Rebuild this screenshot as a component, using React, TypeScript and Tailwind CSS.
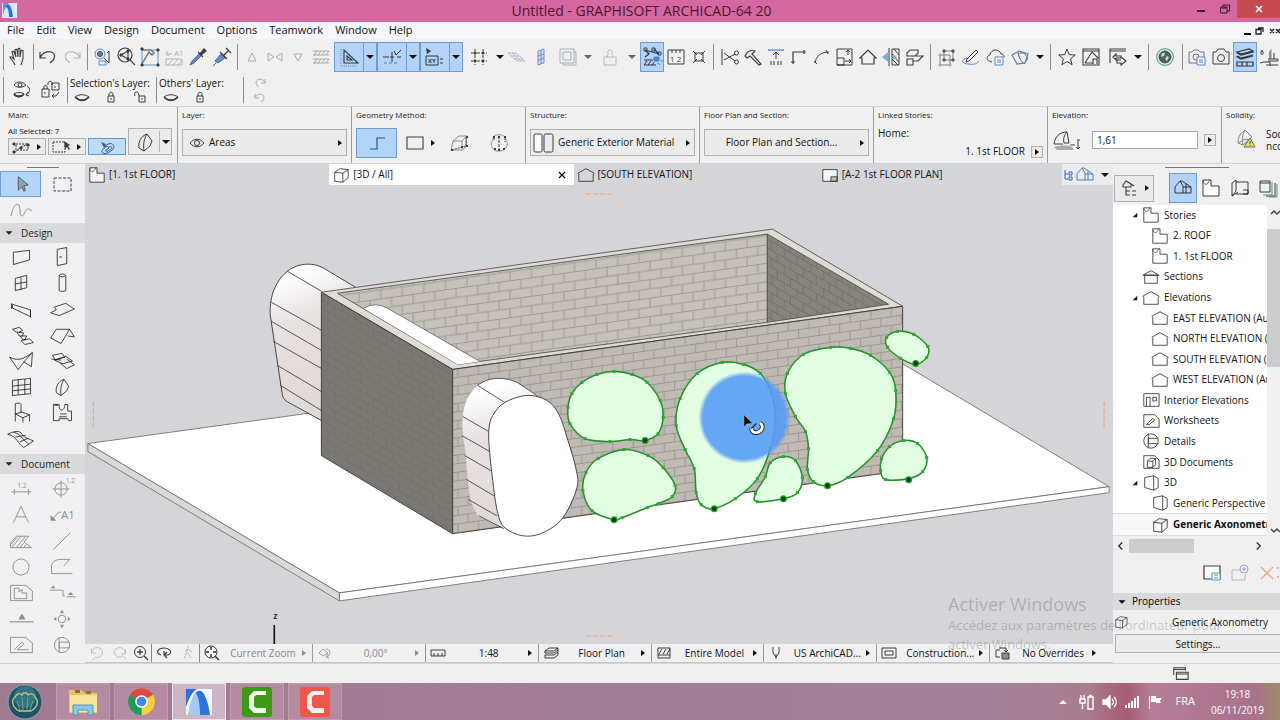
import { ReactNode } from "react";

type Point = [number, number];

const TEXT = "fill-current stroke-none font-['Open_Sans',sans-serif]";

const icons: Record<string, ReactNode> = {
  hand: (
    <path d="M9 20c-1-3-4-6-5-8 1-1 2 0 4 2L6 7c0-1 2-1 2 0l2 5-1-7c0-1 2-1 2 0l1 7V4c0-1 2-1 2 0v8l1-6c0-1 2-1 2 0v8l-2 6" strokeWidth="1.1" />
  ),
  undo: <path d="M4 7v6h6M4 13C7 6 15 5 18 9c2 4-1 7-4 9" strokeWidth="1.2" />,
  redo: <path d="M20 7v6h-6M20 13C17 6 9 5 6 9c-2 4 1 7 4 9" strokeWidth="1.2" />,
  findSelect: (
    <>
      <circle cx="10" cy="9" r="5" stroke="#2f6fb5" />
      <circle cx="10" cy="9" r="2.5" fill="#2f6fb5" />
      <path d="M14 13l5 5M19 6v12M17 8l2-2" />
      <path d="M9 16h7v4H9z" stroke="#2f6fb5" fill="#efeff0" />
    </>
  ),
  zoomGraph: (
    <>
      <circle cx="11" cy="10" r="7" strokeWidth="1.2" />
      <path d="M16 15l5 5M7 10l7-4 0 8z" strokeWidth="1.1" />
      <circle cx="7" cy="10" r="1.200" fill="currentColor" />
      <circle cx="14" cy="6" r="1.200" fill="currentColor" />
      <circle cx="14" cy="14" r="1.200" fill="currentColor" />
    </>
  ),
  hammerBox: (
    <>
      <path d="M4 4v16h16V5h-6" stroke="#3b78bd" />
      <path d="M5 5h8l3 3-2 2-3-3-7 12" stroke="#555" strokeWidth="1.400" />
      <path d="M3 3h2v2H3zM19 4h2v2h-2zM3 19h2v2H3zM19 19h2v2h-2z" fill="currentColor" />
    </>
  ),
  labelHatch: (
    <>
      <path d="M4 14h16v6H4zM6 20l5-6M11 20l5-6M16 20l4-5M4 9h6M4 9l2-3M4 9l3 2" />
      <text x="12" y="11" fontSize="8" className={TEXT}>A1</text>
    </>
  ),
  pick: (
    <>
      <path d="M4 20l2-4 7-7 2 2-7 7z" fill="#3f74b8" stroke="#1f4b85" />
      <path d="M12 7l5 5M14 9l4-5 2 2-5 4z" fill="#222" strokeWidth="1.3" />
    </>
  ),
  inject: (
    <>
      <path d="M3 21l3-3M5 16l6-7 4 4-7 5z" fill="#3f74b8" stroke="#1f4b85" />
      <path d="M10 7l7 7M14 10l5-5M16 3l5 5" strokeWidth="1.3" />
    </>
  ),
  triUp: <path d="M12 8l4 8H8z" />,
  triPair: <path d="M5 8v8l6-4zM19 8v8l-6-4z" />,
  triDown: <path d="M12 16l4-7H8z" />,
  layersHatch: (
    <path d="M4 6h16M4 10h16M4 14h16M4 18h16M5 10l3-4M9 10l3-4M13 10l3-4M17 10l3-4M5 18l3-4M9 18l3-4M13 18l3-4M17 18l3-4" />
  ),
  setSquare: (
    <>
      <path d="M7 5v13h14zM10 11v4h5z" strokeWidth="1.1" />
      <path d="M4 4v17h17" stroke="#777" strokeDasharray="1 1" />
    </>
  ),
  guideLine: (
    <>
      <path d="M3 12h6M12 7v10M10 12h4M14 6l2 4 5-5M17 12h4" />
      <path d="M4 18h15" stroke="#2f6fb5" strokeDasharray="3 2" />
    </>
  ),
  tracker: (
    <>
      <path d="M3 11h12v9H3zM17 14h3M17 18h3" />
      <path d="M3 3l5 3-4 3z" fill="currentColor" stroke="none" />
      <text x="5" y="18" fontSize="6" fontWeight="bold" className={TEXT}>XY</text>
    </>
  ),
  grid: (
    <>
      <path d="M8 4v16M16 4v16M4 8h16M4 16h16" strokeDasharray="4 1" />
      <path d="M7 7h2v2H7zM15 7h2v2h-2zM7 15h2v2H7zM15 15h2v2h-2z" fill="currentColor" stroke="none" />
    </>
  ),
  flatGrid: <path d="M3 8h8l9 8h-8zM6 11h8M9 14h9M7 8l9 8" />,
  plane: <path d="M9 6l6-2v14l-6 2zM9 11l6-2M9 15l6-2M12 5v14" fill="#c7d8f5" />,
  frames: <path d="M4 4h14v14H4zM7 7h8v8H7zM18 7h2v13H7v-2" />,
  weight: <path d="M6 12h12v8H6zM9 12c0-3 2-2 1-4-2-4 6-4 4 0-1 2 1 1 1 4" />,
  snapPen: (
    <>
      <path d="M5 5l14 4M4 15h9M4 20h12M5 5l4 4-4 3M14 4l5 5" strokeWidth="1.2" />
      <path d="M4 3h3v3H4zM12 3h3v3h-3zM18 7h3v3h-3z" strokeWidth="0.9" />
      <path d="M14 12h5v4h-5z" fill="#2f72c4" stroke="#2f72c4" />
      <path d="M4 20l3-4M8 20l3-4M12 20l2-3" />
      <path d="M18 18l2 2M21 16h2" stroke="#2f72c4" />
    </>
  ),
  ruler: (
    <>
      <path d="M4 5h16v14H4zM8 5v3M12 5v3M16 5v3" />
      <text x="6" y="17" fontSize="8" className={TEXT}>1 2</text>
    </>
  ),
  explode: <path d="M8 8h8v8H8zM6 6l4 4M18 6l-4 4M6 18l4-4M18 18l-4-4" />,
  scissors: (
    <>
      <path d="M4 4v16M6 8l11 8M6 15l11-6" />
      <circle cx="18.500" cy="8" r="2" />
      <circle cx="18.500" cy="17" r="2" />
    </>
  ),
  axe: <path d="M4 11c3-6 7-6 10-5l-3 3 9 10-2 1-9-9-3 2z" strokeWidth="1.2" />,
  adjust: (
    <>
      <path d="M4 5h16" stroke="#3467c4" strokeWidth="1.300" />
      <path d="M12 7v7M9 10l3-3 3 3M7 16v4M10 16v4M14 16v4M17 16v4" />
    </>
  ),
  fillet: <path d="M6 19V7h13M4 17h4M17 5v4" strokeWidth="1.2" />,
  curve: <path d="M5 18c1-7 6-11 14-11M4 16l3 3M16 5l2 4" />,
  resize: (
    <path d="M4 4h15v16H4zM4 13h7v7H4M15 10V5M13 7l2-2 2 2M12 16h6M16 14l2 2-2 2" />
  ),
  home: <path d="M4 13l8-8 8 8h-2v6H6v-6z" strokeWidth="1.2" />,
  splitHatch: (
    <>
      <path d="M10 3v18M13 4h7v16h-7zM13 9l7 8M13 14l6 6M15 4l5 6" />
      <path d="M9 7v10l-6-5zM14 9l4 3-4 3z" fill="#5b9cf0" stroke="none" />
    </>
  ),
  stack: <path d="M5 8l3-3h8v3l-3 3H5zM5 14h6v6H5zM8 11h13l-5 5h-5M5 11h3" strokeWidth="1.1" />,
  group: (
    <>
      <path d="M9 6h9v9H9zM5 10h10v10H5z" stroke="#666" />
      <path d="M8 5h2v2H8zM17 5h2v2h-2zM17 14h2v2h-2zM8 14h2v2H8z" />
      <path d="M4 9h2v2H4zM4 19h2v2H4zM14 19h2v2h-2z" stroke="#999" />
    </>
  ),
  pencil: (
    <>
      <path d="M8 14l9-9 2 2-9 9-3 1z" />
      <path d="M8 13c-6 2-6 5 1 6s11-1 10-3" stroke="#3467c4" />
    </>
  ),
  cloudPage: (
    <>
      <path d="M9 17c-7-1-5-7-2-7 1-7 10-6 11-1 2 0 3 1 3 3" />
      <path d="M12 12h8v8h-8zM14 15h4M14 17h4" stroke="#3467c4" fill="#fff" />
    </>
  ),
  morph: (
    <>
      <path d="M3 10l7-4 9 3-3 9-8 1z" stroke="#3467c4" strokeWidth="1.200" />
      <path d="M9 8h6l4 5-4 6-4-5zM9 8l2 6" stroke="#555" />
    </>
  ),
  star: <path d="M12 4l2.200 5.600 6 .4-4.600 3.800 1.500 5.900L12 16.500 6.900 19.700l1.500-5.900L3.800 10l6-.4z" />,
  picture: <path d="M4 4h16v16H4zM6 18l7-11 6 6M4 6h16M14 19v-5h4v5M6 18h8" strokeWidth="1.100" />,
  swap: <path d="M4 18V4h16M4 6h16M10 9l-3 3 3 3v-2h5v-2h-5zM15 12l5 4-5 4v-2h-4v-3h4" strokeWidth="1.100" />,
  globe: (
    <>
      <circle cx="12" cy="12" r="8.300" stroke="#2f9b75" strokeWidth="1.200" />
      <circle cx="12" cy="12" r="6" fill="#254039" stroke="#1c2b28" />
      <path d="M9 8l3 0-1 3-3 1zM14 11l2 1-2 4-2-2z" fill="#b5dccb" stroke="none" />
    </>
  ),
  cameraPage: (
    <>
      <path d="M4 7h3l2-2h4l2 2h4v11H4z" stroke="#555" />
      <circle cx="11" cy="12" r="3" stroke="#555" />
      <path d="M12 12h8v8h-8zM14 15h4M14 17h4" stroke="#3467c4" fill="#fff" />
    </>
  ),
  camera: (
    <>
      <path d="M4 7h3l2-3h6l2 3h3v12H4z" />
      <circle cx="12" cy="13" r="3.500" />
    </>
  ),
  sheets: (
    <path d="M4 7l12-3 4 2-12 3zM4 7v1l4 2 12-3V6M4 11l4 2 12-3M4 11v1l4 2 12-3M4 17h16v4H4zM9 17v4M14 17v4" strokeWidth="1.200" />
  ),
  siteFill: (
    <>
      <path d="M5 5c-4 6 4 6 0 0M3 18l4-1h6v4M9 20h12M11 14h10v2H11M13 14V6M17 14V8" />
      <path d="M14 4v9" stroke="#1f9f6b" />
    </>
  ),
  eyeSwap: (
    <>
      <path d="M4 7c3-4 8-4 12 0-4 3-9 3-12 0zM4 16c2-2 8-2 10 0-2 4-8 4-10 0zM17 8c4 2 3 7-1 9M18 14l-2 3 3 1" />
      <circle cx="10" cy="7" r="2" />
      <path d="M4 16c2 3 8 3 10 0" strokeWidth="1.800" />
    </>
  ),
  lockSwap: (
    <path d="M3 11h7v8H3zM5 11c-1-5 4-5 3 0M13 5h7v7h-7zM9 7c-1-5 5-5 4 0M20 14l-3 4h-3M15 16l-2 2 2 2M6 14v2M16 8v2" />
  ),
  eyeClosed: (
    <>
      <path d="M5 12c4-3 10-3 14 0-4 5-10 5-14 0z" />
      <path d="M5 12c4 4 10 4 14 0" strokeWidth="1.600" />
    </>
  ),
  lock: <path d="M9 11h6v6H9zM10 11c-1-5 5-5 4 0M12 13v2" />,
  unlock: <path d="M11 11h6v6h-6zM7 11c-2-5 4-6 4 0M14 13v2" />,
  nodes: (
    <>
      <path d="M7 9h12v6H7zM5 18l7-6 7-3" strokeDasharray="2 1" />
      <path d="M4 8h2v2H4zM4 16h2v2H4zM11 12h2v2h-2zM18 9h2v2h-2z" fill="currentColor" />
    </>
  ),
  marqueeArrow: (
    <>
      <path d="M4 7h12v10H4z" strokeDasharray="2 1" />
      <path d="M15 6l6 4-2 1 2 3-1 1-2-3-2 2z" fill="currentColor" stroke="none" />
    </>
  ),
  magnet: (
    <>
      <path d="M9 12l4-3c5-2 8 3 4 6l-4 3c-5 2-8-1-5-4l4-3 2 2-3 2c-1 2 1 2 2 1l3-2c2-2 0-3-2-2" />
      <path d="M6 7l5 2-2 4z" fill="currentColor" stroke="none" />
    </>
  ),
  shell: <path d="M14 4C8 6 5 12 6 18l5 3c-1-7 0-12 3-17l5 7-2 5-6 5" />,
  eye: (
    <>
      <path d="M5 12c4-5 10-5 14 0-4 5-10 5-14 0z" />
      <circle cx="12" cy="12" r="2.500" />
    </>
  ),
  polyline: <path d="M5 18h7V7h8" stroke="#17365e" strokeWidth="1.200" />,
  rect: <path d="M4 6h16v12H4z" strokeWidth="1.100" />,
  cubeNodes: (
    <>
      <path d="M4 19l2-9 6-5h8l-1 11-4 3zM6 10h9l5-5M15 10v8" stroke="#777" />
      <path d="M5 19l10-3 4-1V6" strokeDasharray="2 1" />
      <path d="M4 18h2v2H4zM19 5h2v2h-2zM14 15h2v2h-2zM19 14h2v2h-2z" fill="currentColor" stroke="none" />
    </>
  ),
  revolve: (
    <>
      <path d="M6 6c3-3 9-3 12 0l1 3c4 5-1 10-5 11h-5c-5-3-6-8-3-11z" stroke="#777" />
      <path d="M12 5v15M7 6v4M18 6v5" strokeDasharray="3 1" />
      <path d="M6 5h2v2H6zM11 5h2v2h-2zM17 5h2v2h-2zM11 18h2v2h-2zM7 17h2v2H7zM16 17h2v2h-2z" fill="currentColor" stroke="none" />
    </>
  ),
  composite: (
    <>
      <rect x="2" y="3" width="8" height="18" rx="1.500" fill="#fff" />
      <rect x="12" y="3" width="9" height="18" rx="1.500" />
    </>
  ),
  shellLevel: (
    <>
      <path d="M2 16c1-7 5-12 13-12l2 11h-5c-1-4 0-8 3-11M2 16h9M18 17h5" />
      <path d="M26 13v8M24 19l2 2 2-2M25 12h3" />
      <path d="M2 19c6-2 14-2 18 0l2 3H5z" fill="#999" stroke="none" />
    </>
  ),
  warnShell: (
    <>
      <path d="M11 2c-6 4-7 9-7 13l5 2 9-8zM11 2c-3 5-3 10-2 15M4 15l7-4 7 2" stroke="#666" />
      <path d="M16 10l5 9H10z" fill="#f3e233" stroke="#444" />
      <path d="M16 13v3M16 17v1" />
    </>
  ),
  arrow: <path d="M9 4v15l4-4 2 5 2-1-2-5 5-1z" fill="#8b97a5" stroke="#333" />,
  marquee: <path d="M4 6h17v13H4z" strokeDasharray="3 1.500" />,
  spline: <path d="M2 18C5 3 11 4 11 12s3 7 5 2 5-3 7-1" />,
  wall: <path d="M4 7l17-2v10L4 20z" />,
  door: <path d="M7 4l10-2v17l-10 2zM9 12h3" />,
  window: <path d="M6 7l12-3v13L6 20zM6 13l12-2M12 6v13" />,
  column: <path d="M9 4c1-2 6-2 7 0v16c-1 1-6 1-7 0zM9 4c1 2 6 2 7 0" />,
  beam: <path d="M3 7l19 6v7L3 11zM2 6v6M22 13v8" />,
  slab: <path d="M0 16l6-3-2-3 12-4 9 6-16 7z" />,
  stair: <path d="M3 6l7-2 4 3-4 2 5 1-2 3 5 0-2 4 5-1 4 4-9 2-4-4 4-1M3 6l4 3h4M8 9l2 4h4M11 13l3 4h3" />,
  roof: <path d="M0 15l6-9h14l-9 15zM20 6l5 8-7-1" />,
  meshTri: <path d="M0 8c8 4 14 3 24-5l-1 15-8-5-6 8zM15 13l8-9" />,
  skylight: <path d="M2 6l10-2 3 4-10 3zM4 11l12-4 7 5-10 3zM10 14l7 6 8-4-8-6M1 10l10 1" />,
  curtain: <path d="M3 5l19-2v16L3 21zM3 11l19-2M3 16l19-2M9 4v16M16 4v16" />,
  chair: <path d="M6 2c4-1 7 0 6 2v8M6 2v19M6 13l7-2 8 3-7 3zM14 17v5M21 14v7" />,
  zone: <path d="M3 3h6c0 3 0 5 2 6 3 0 4-3 4-6h3v7h4v10h-3l-1-2H9v2H3zM10 13h7M9 16h8M4 4l4 0" />,
  mesh: <path d="M-2 7c8-4 13-4 15 0 3 4 8 5 12 7l-10 7C9 18 8 9-2 7zM6 10l11-2M11 15l9-4M4 5c8 1 8 7 16 12" />,
  dim: (
    <>
      <path d="M2 15h21M5 12v6M20 12v6" />
      <text x="8" y="11" fontSize="7" className={TEXT}>1.2</text>
    </>
  ),
  levelDim: (
    <>
      <circle cx="11" cy="12" r="6.500" />
      <path d="M2 12h18M11 3v18" />
      <text x="16" y="6" fontSize="7" className={TEXT}>1.2</text>
    </>
  ),
  textA: <path d="M4 20l8-17 8 17M7 14h10" />,
  label: (
    <>
      <path d="M1 17l6-6c1-2 2-2 4-2" />
      <path d="M0 18v-6l6 6z" fill="currentColor" stroke="none" />
      <text x="11" y="16" fontSize="12" className={TEXT}>A1</text>
    </>
  ),
  fill: <path d="M1 19v-5l6-7h13l-5 6 8 6zM3 18l9-11M7 19l9-11M11 19l4-5M15 19l2-3M2 15l6-7" />,
  line: <path d="M3 21L21 3" />,
  circle: <circle cx="12" cy="12" r="8.500" />,
  polyarc: <path d="M23 19H1V10c1-4 5-6 9-6h10l-6 7" />,
  drawing: <path d="M1 4h16l7 6v10H1zM5 7h5v4l3-3v4h5v6H5z" />,
  section: (
    <>
      <path d="M-1 9h14v6h2M17 16h9" />
      <path d="M0 7l3-3 2 3zM18 14l3-3 3 3z" fill="currentColor" stroke="none" />
    </>
  ),
  elevation: (
    <>
      <path d="M0 15h25" strokeWidth="1.200" />
      <path d="M10 12l3-5 3 5z" fill="currentColor" />
    </>
  ),
  interior: (
    <>
      <circle cx="12" cy="12" r="4" />
      <path d="M12 2l2 4h-4zM12 22l2-4h-4zM3 12l3-2v4zM21 12l-3-2v4z" fill="currentColor" stroke="none" />
    </>
  ),
  worksheet: <path d="M1 4h16l7 6v10H1zM5 17l8-8 2 2-7 6h12" />,
  detail: (
    <>
      <circle cx="12" cy="12" r="8" />
      <path d="M9 4v16M9 9h11M9 15h11M9 9v6" />
    </>
  ),
  story: (
    <>
      <path d="M4 4h8v6h8v10H4z" fill="#fff" />
      <path d="M4 4c0 3 2 5 4 4l3-4" strokeWidth="0.800" />
    </>
  ),
  house: <path d="M3 10l9-5 9 5M5 10v9h14v-9zM3 10h18" />,
  pentagon: <path d="M3 10l9-5 9 5-1 1v8H4v-8z" />,
  interiorBox: <path d="M4 5h17v14H4zM7 19V9h4v10M14 9h4v4h-4z" />,
  sheetPen: <path d="M4 5h12l5 5v9H4zM7 16l7-7 2 2-6 5z" />,
  docCube: <path d="M4 5h12l5 5v9H4zM8 11h6v7H8zM8 11l3-3h6v7l-3 3M14 11l3-3" />,
  persp: <path d="M5 6l10-2 5 3v10l-5 3-10-3zM15 4v16" />,
  axo: <path d="M5 9l6-4 9 1v9l-6 5-9-1zM5 9l9 1 6-4M14 10v10" />,
  layout: (
    <>
      <path d="M4 6h16v13H4z" fill="#fff" />
      <path d="M13 14h7v5h-7z" fill="currentColor" fillOpacity="0.300" />
    </>
  ),
  houseBlue: <path d="M4 17v-6l5-6 3 5v7zM9 5h2l9 6v6h-8M12 11h8M15 8v9" />,
  treeHouse: <path d="M6 9l3-4 5 3v3H6zM9 11v8h4M9 15h4M15 15h4M15 19h4M11 6l6 4" strokeWidth="1.100" />,
  viewMap: <path d="M5 20V7l4-3v11zM9 6h12v12H9M16 14h5v4h-5M5 20l6-4" />,
  books: (
    <>
      <path d="M3 5h10v11H3zM3 7h10M18 7v13H9" />
      <path d="M15 6v13H6M20 8v13h-8" stroke="#2c7a5c" />
    </>
  ),
  zoomOut: <path d="M6 7v5h5M6 12c0-8 13-8 12 0-1 5-6 6-8 4M7 20l3-3" />,
  zoomBack: <path d="M19 8v5h-5M19 12c0-8-13-8-12 0 1 5 6 6 9 3l4 4" />,
  zoomIn: (
    <>
      <circle cx="11" cy="11" r="5.500" />
      <path d="M15 15l4 4M8 11h6M11 8v6" strokeWidth="1.300" />
    </>
  ),
  orbit: <path d="M9 14c-7-3-2-7 3-7s10 4 4 7l-3 0M15 11l-3 3 3 3M12 10v4" strokeWidth="1.100" />,
  walk: <path d="M12 5v2M12 8l-2 5-2 5M12 12l3 5M9 10l3-2 4 3" />,
  fitZoom: (
    <>
      <circle cx="11" cy="11" r="6" />
      <path d="M15 15l4 4M11 6v3M11 13v3M6 11h3M13 11h3" strokeWidth="1.400" />
    </>
  ),
  rotate: <path d="M6 12l4-4 5 4-5 3zM13 8c5 0 5 6 1 8M15 13l-2 3 3 1" />,
  scale: <path d="M5 9h14v6H5zM8 12v3M12 12v3M16 12v3" />,
  layerStack: <path d="M6 10l4-3h9l-4 3zM6 10v2h9l4-3M6 14h9l4-3M6 14v3h9l4-3v-7" />,
  model: <path d="M6 7h12v10H6zM6 14h12M7 13l3-5M11 13l3-5M15 13l3-5" />,
  pen: <path d="M9 6v6l3 4 3-4V6M12 13v5" />,
  doubleRect: <path d="M5 7h14v10H5zM8 10h8v4H8z" />,
  override: (
    <>
      <path d="M10 16H6V9h4M9 7h7v3M14 9l2 2 2-2" />
      <path d="M12 12h7v6h-7z" fill="#777" />
    </>
  ),
  windows: <path d="M5 13V5h13v3M5 7h13M8 10h13v8H8zM8 12h13" strokeWidth="1.200" />,
  newView: (
    <>
      <path d="M4 5h16v13H4z" fill="#fff" strokeWidth="1.200" />
      <path d="M12 12h8v7h-8zM14 14h4M14 17h4" stroke="#2b8bc2" fill="#fff" />
    </>
  ),
  addFolder: (
    <>
      <path d="M4 9h8M4 9v10h13v-6" stroke="#aaa" />
      <circle cx="16" cy="8" r="4" />
      <path d="M14 8h4M16 6v4" />
    </>
  ),
  cross: <path d="M5 6l12 12M17 6L5 18M21 7h2M21 16h2" strokeWidth="1.400" />,
};

function Icon({ name, className = "" }: { name: string; className?: string }) {
  return (
    <svg
      viewBox="0 0 24 24"
      className={`size-6 shrink-0 overflow-visible opacity-80 ${className}`}
      fill="none"
      stroke="currentColor"
      aria-hidden="true"
    >
      {icons[name]}
    </svg>
  );
}

function Caret({ dir = "right", className = "" }: { dir?: "right" | "down" | "open"; className?: string }) {
  const shapes = { right: "M2 1l4 3-4 3z", down: "M0 2h8L4 6z", open: "M7 1v6H1z" };
  return (
    <svg viewBox="0 0 8 8" className={`size-2 shrink-0 fill-current ${className}`} aria-hidden="true">
      <path d={shapes[dir]} />
    </svg>
  );
}

function Tool({ name, width = "w-6", className = "" }: { name: string; width?: string; className?: string }) {
  return (
    <button type="button" aria-label={name} className={`flex h-[30px] shrink-0 items-center justify-center ${width} ${className}`}>
      <Icon name={name} />
    </button>
  );
}

function CaretButton({ className = "" }: { className?: string }) {
  return (
    <button type="button" aria-label="More options" className={`flex h-[30px] w-2.5 shrink-0 items-center justify-center ${className}`}>
      <Caret dir="down" />
    </button>
  );
}

function Divider() {
  return (
    <div className="flex w-1.5 shrink-0 justify-center">
      <div className="h-[26px] w-px bg-[#8a8a8a]" />
    </div>
  );
}

function SplitTool({ name }: { name: string }) {
  return (
    <div className="flex h-[30px] w-[43px] shrink-0 border border-[#6f9ccb] bg-[#b3d3f8]">
      <button type="button" aria-label={name} className="flex flex-1 items-center justify-center">
        <Icon name={name} />
      </button>
      <button type="button" aria-label={`${name} options`} className="flex w-[13px] items-center justify-center border-l border-[#6f9ccb]">
        <Caret dir="down" />
      </button>
    </div>
  );
}

const active = "border border-[#6f9ccb] bg-[#b3d3f8]";

function TitleBar() {
  return (
    <header className="relative flex h-[22px] shrink-0 items-start bg-[#d567a1]">
      <svg viewBox="0 0 16 16" className="mt-[3px] ml-[2px] size-4">
        <path d="M0 0h15v15H0z" fill="#dbe8fb" />
        <path d="M1 0h6C4 3 2 7 1 12z" fill="#5d94e6" />
        <path d="M5 2c3-2 5 4 6 12H7C7 8 6 4 3 4z" fill="#2d6fe0" />
      </svg>
      <h1 className="flex-1 pl-[76px] text-center text-[14px] leading-[22px] text-[#4b1733]">
        Untitled - GRAPHISOFT ARCHICAD-64 20
      </h1>
      <button type="button" aria-label="Minimize" className="flex h-[18px] w-6 items-center justify-center pt-1">
        <span className="h-0.5 w-2 bg-[#37152a]" />
      </button>
      <button type="button" aria-label="Restore" className="flex h-[18px] w-6 items-center justify-center">
        <svg viewBox="0 0 10 10" className="size-2.5" fill="none" stroke="#37152a">
          <path d="M.5 3h6.500v6H.5zM.5 4h6M3 3V1h6.500v6H7" />
        </svg>
      </button>
      <button type="button" aria-label="Close" className="flex h-[18px] w-[43px] items-center justify-center bg-[#c64b50]">
        <svg viewBox="0 0 8 8" className="size-2" stroke="#fff" strokeWidth="1.600">
          <path d="M1 1l6 6M7 1L1 7" />
        </svg>
      </button>
    </header>
  );
}

const menus = ["File", "Edit", "View", "Design", "Document", "Options", "Teamwork", "Window", "Help"];

function MenuBar() {
  return (
    <nav className="flex h-[17px] shrink-0 items-center gap-3 overflow-hidden bg-[#f6f6fa] pl-[7px] text-[11px]">
      {menus.map((menu) => (
        <button key={menu} type="button">
          {menu}
        </button>
      ))}
      <div className="ml-auto flex items-center gap-1">
        <span className="mt-1.5 h-0.5 w-[7px] bg-black" />
        <svg viewBox="0 0 9 8" className="h-2 w-[9px]" fill="none" stroke="#222">
          <path d="M1 2.500h5V7H1zM3 1h5v4" strokeWidth="1.300" />
        </svg>
        <svg viewBox="0 0 12 8" className="h-2 w-3" fill="none" stroke="#222" strokeWidth="1.500">
          <path d="M2 2l4 4M6 2L2 6M8 2l4 4M12 2L8 6" />
        </svg>
      </div>
    </nav>
  );
}

function MainToolbar() {
  return (
    <div className="flex h-[35px] shrink-0 items-center overflow-hidden">
      <Divider />
      <Tool name="hand" />
      <Divider />
      <Tool name="undo" />
      <Tool name="redo" className="text-[#aaa]" />
      <Divider />
      <Tool name="findSelect" />
      <Tool name="zoomGraph" />
      <Tool name="hammerBox" />
      <Tool name="labelHatch" className="text-[#a5a5a5]" />
      <Tool name="pick" />
      <Tool name="inject" />
      <Divider />
      <div className="mr-0.5 flex text-[#9a9a9a]">
        <Tool name="triUp" width="w-[23px]" />
        <Tool name="triPair" width="w-[23px]" />
        <Tool name="triDown" width="w-[23px]" />
        <Tool name="layersHatch" width="w-[23px]" />
      </div>
      <SplitTool name="setSquare" />
      <SplitTool name="guideLine" />
      <SplitTool name="tracker" />
      <Tool name="grid" width="w-8" />
      <CaretButton />
      <Tool name="flatGrid" className="text-[#a9afc4]" />
      <Tool name="plane" className="text-[#5576b8]" />
      <Tool name="frames" width="w-[30px]" className="text-[#9aa0ae]" />
      <CaretButton className="text-[#666]" />
      <Tool name="weight" width="w-[34px]" className="text-[#aaa]" />
      <CaretButton className="mr-[3px] text-[#666]" />
      <Tool name="snapPen" className={active} />
      <Tool name="ruler" width="w-[23px]" />
      <Tool name="explode" width="w-[23px]" />
      <Divider />
      <div className="flex px-0.5">
        {["scissors", "axe", "adjust", "fillet", "curve", "resize", "home", "splitHatch", "stack"].map((name) => (
          <Tool key={name} name={name} width="w-[23px]" />
        ))}
      </div>
      <Divider />
      <div className="flex px-0.5">
        <Tool name="group" />
        <Tool name="pencil" />
        <Tool name="cloudPage" />
        <Tool name="morph" width="w-7" />
        <CaretButton />
      </div>
      <Divider />
      <div className="flex px-0.5">
        <Tool name="star" />
        <Tool name="picture" />
        <Tool name="swap" width="w-[30px]" />
        <CaretButton />
      </div>
      <Divider />
      <Tool name="globe" width="w-7" />
      <Divider />
      <Tool name="cameraPage" />
      <Tool name="camera" />
      <Tool name="sheets" className={active} />
      <Tool name="siteFill" />
    </div>
  );
}

function LayerToolbar() {
  return (
    <div className="flex h-8 shrink-0 items-center overflow-hidden text-[10px] leading-3">
      <Divider />
      <Tool name="eyeSwap" width="w-8" />
      <Tool name="lockSwap" width="w-[26px]" />
      <Divider />
      <div className="h-[30px] w-[86px] pt-0.5">
        <p className="whitespace-nowrap">Selection's Layer:</p>
        <div className="flex gap-[5px]">
          <Icon name="eyeClosed" className="-mt-1" />
          <Icon name="lock" className="-mt-1" />
          <Icon name="unlock" className="-mt-1" />
        </div>
      </div>
      <div className="h-[26px] w-px bg-[#8a8a8a]" />
      <div className="h-[30px] w-[86px] pt-0.5 pl-0.5">
        <p className="whitespace-nowrap">Others' Layer:</p>
        <div className="flex gap-[5px]">
          <Icon name="eyeClosed" className="-mt-1" />
          <Icon name="lock" className="-mt-1" />
        </div>
      </div>
      <div className="h-[26px] w-px bg-[#8a8a8a]" />
      <div className="flex flex-col gap-0.5 pl-2.5 text-[#aaa]">
        <svg viewBox="0 0 12 12" className="size-3" fill="none" stroke="currentColor">
          <path d="M11 2v4H7M11 6C9 1 3 1 2 5c0 2 1 4 3 5" />
        </svg>
        <svg viewBox="0 0 12 12" className="size-3" fill="none" stroke="currentColor">
          <path d="M1 3v4h4M1 7c2-5 8-5 9-1 0 2-1 4-3 5" />
        </svg>
      </div>
    </div>
  );
}

function InfoCell({ label, children, className = "w-[174px]" }: { label: string; children: ReactNode; className?: string }) {
  return (
    <section className={`shrink-0 border-r border-[#9b9b9b] px-1 pt-[3px] ${className}`}>
      <h2 className="text-[8px] leading-[10px] text-[#222]">{label}</h2>
      {children}
    </section>
  );
}

const box = "flex items-center border border-[#b0b0b0] bg-[#ebebeb]";

function InfoBox() {
  return (
    <div className="flex h-[58px] shrink-0 overflow-hidden border-y border-[#d0d0d0] text-[10px]">
      <InfoCell label="Main:" className="w-[178px] pl-2">
        <div className="flex items-end gap-0.5">
          <div className="w-[118px]">
            <p className="mt-1.5 text-[8px] leading-[10px]">All Selected: 7</p>
            <div className="mt-0.5 flex gap-0.5">
              <button type="button" aria-label="Selection" className={`${box} h-[17px] w-[38px] justify-between pr-0.5`}>
                <Icon name="nodes" />
                <Caret />
              </button>
              <button type="button" aria-label="Marquee" className={`${box} h-[17px] w-[38px] justify-between pr-0.5`}>
                <Icon name="marqueeArrow" />
                <Caret />
              </button>
              <button type="button" aria-label="Magnet" className="flex h-[17px] w-[38px] items-center justify-center border border-[#5b9bd5] bg-[#bfdcf7] text-[#1c3f6e]">
                <Icon name="magnet" />
              </button>
            </div>
          </div>
          <button type="button" aria-label="Tool defaults" className={`${box} h-[27px] w-11 shrink-0 justify-between pr-px pl-1`}>
            <Icon name="shell" />
            <span className="h-[21px] w-px bg-[#b5b5b5]" />
            <Caret dir="down" />
          </button>
        </div>
      </InfoCell>
      <InfoCell label="Layer:">
        <button type="button" className={`${box} mt-[9px] h-[27px] w-full pr-0.5`}>
          <Icon name="eye" className="ml-0.5" />
          <span className="flex-1 text-left">Areas</span>
          <Caret />
        </button>
      </InfoCell>
      <InfoCell label="Geometry Method:">
        <div className="mt-2 flex items-center">
          <Tool name="polyline" width="w-[41px]" className={active} />
          <Tool name="rect" width="w-9" />
          <Caret className="-ml-1" />
          <Tool name="cubeNodes" width="w-11" />
          <Tool name="revolve" width="w-9" />
        </div>
      </InfoCell>
      <InfoCell label="Structure:">
        <button type="button" className={`${box} mt-[9px] h-[27px] w-full pr-0.5 pl-px whitespace-nowrap`}>
          <Icon name="composite" />
          <span className="flex-1 pl-0.5 text-left">Generic Exterior Material</span>
          <Caret />
        </button>
      </InfoCell>
      <InfoCell label="Floor Plan and Section:">
        <button type="button" className={`${box} mt-[9px] h-[27px] w-full pr-0.5`}>
          <span className="flex-1">Floor Plan and Section...</span>
          <Caret />
        </button>
      </InfoCell>
      <InfoCell label="Linked Stories:">
        <p className="mt-1.5 leading-[14px]">Home:</p>
        <div className="mt-1 flex items-center justify-end gap-1.5">
          <span>1. 1st FLOOR</span>
          <button type="button" aria-label="Change home story" className={`${box} size-3 justify-center`}>
            <Caret />
          </button>
        </div>
      </InfoCell>
      <InfoCell label="Elevation:">
        <div className="mt-2 flex items-center">
          <Icon name="shellLevel" className="mr-2" />
          <input
            aria-label="Elevation"
            defaultValue="1,61"
            className="ml-2 h-[18px] w-[106px] border border-[#a8a8a8] bg-white px-1"
          />
          <button type="button" aria-label="Elevation options" className={`${box} ml-1.5 size-3 justify-center`}>
            <Caret />
          </button>
        </div>
      </InfoCell>
      <InfoCell label="Solidity:">
        <div className="mt-2 flex items-center gap-2 pl-2">
          <Icon name="warnShell" />
          <p className="leading-3">
            Soo
            <br />
            nco
          </p>
        </div>
      </InfoCell>
    </div>
  );
}

const designTools = [
  "wall", "door", "window", "column", "beam", "slab", "stair", "roof",
  "meshTri", "skylight", "curtain", "shell", "chair", "zone", "mesh",
];
const documentTools = [
  "dim", "levelDim", "textA", "label", "fill", "line", "circle", "polyarc",
  "drawing", "section", "elevation", "interior", "worksheet", "detail",
];

function ToolGrid({ tools, className = "" }: { tools: string[]; className?: string }) {
  return (
    <div className={`grid grid-cols-2 pr-[3px] ${className}`}>
      {tools.map((tool) => (
        <button key={tool} type="button" aria-label={tool} className="flex h-[26px] items-center justify-center">
          <Icon name={tool} className="scale-95" />
        </button>
      ))}
    </div>
  );
}

function PaletteHeader({ children, className = "" }: { children: ReactNode; className?: string }) {
  return (
    <h2 className={`flex items-center bg-[#dadadc] pl-[5px] text-[10px] font-medium text-[#222] ${className}`}>
      <Caret dir="down" className="mr-1.5 scale-90" />
      {children}
    </h2>
  );
}

function Toolbox() {
  return (
    <aside className="w-[85px] shrink-0 bg-[#f1f1f3]">
      <div className="flex h-[7px] items-center justify-center">
        <span className="h-px w-8 bg-[#777]" />
      </div>
      <div className="grid grid-cols-2 pr-[3px]">
        <button type="button" aria-label="Arrow" className={`flex h-[26px] items-center justify-center ${active}`}>
          <Icon name="arrow" className="scale-90" />
        </button>
        <button type="button" aria-label="Marquee area" className="flex h-[26px] items-center justify-center">
          <Icon name="marquee" />
        </button>
        <button type="button" aria-label="Spline" className="flex h-[26px] items-center justify-center text-[#777]">
          <Icon name="spline" />
        </button>
      </div>
      <PaletteHeader className="h-5">
        <span className="pl-0.5">Design</span>
      </PaletteHeader>
      <ToolGrid tools={designTools} className="pt-px" />
      <PaletteHeader className="mt-0.5 h-5">
        <span className="pl-0.5">Document</span>
      </PaletteHeader>
      <ToolGrid tools={documentTools} className="pt-0.5 text-[#777]" />
    </aside>
  );
}

const tabs = [
  { title: "[1. 1st FLOOR]", icon: "story" },
  { title: "[3D / All]", icon: "axo", current: true },
  { title: "[SOUTH ELEVATION]", icon: "pentagon" },
  { title: "[A-2 1st FLOOR PLAN]", icon: "layout" },
];

function TabBar() {
  return (
    <div className="flex h-[21px] shrink-0 bg-[#d5d6da] text-[10px]">
      {tabs.map((tab) => (
        <div key={tab.title} className={`flex min-w-0 flex-1 items-center ${tab.current ? "bg-white" : ""}`}>
          <Icon name={tab.icon} className="scale-90" />
          <button type="button" className="flex-1 truncate text-left">
            {tab.title}
          </button>
          {tab.current && (
            <button type="button" aria-label="Close tab" className="mr-2">
              <svg viewBox="0 0 8 8" className="size-2" stroke="#000" strokeWidth="1.200">
                <path d="M1 1l6 6M7 1L1 7" />
              </svg>
            </button>
          )}
        </div>
      ))}
      <div className="flex w-[51px] items-center justify-end gap-1 bg-[#ececee] pr-1">
        <span className="flex text-[#2f62b5]">
          <svg viewBox="0 0 10 12" className="mt-1.5 h-3 w-2.5" fill="none" stroke="currentColor">
            <path d="M2 1v9h3M2 5h3M6 3h3v3H6zM6 8h3v3H6z" />
          </svg>
          <Icon name="houseBlue" />
        </span>
        <Caret dir="down" />
      </div>
    </div>
  );
}

// Closed Catmull-Rom curve through the given nodes
function smooth(points: Point[]) {
  const n = points.length;
  let d = `M${points[0][0]} ${points[0][1]}`;
  for (let i = 0; i < n; i++) {
    const a = points[(i + n - 1) % n];
    const b = points[i];
    const c = points[(i + 1) % n];
    const e = points[(i + 2) % n];
    d += `C${b[0] + (c[0] - a[0]) / 6} ${b[1] + (c[1] - a[1]) / 6} ${c[0] - (e[0] - b[0]) / 6} ${c[1] - (e[1] - b[1]) / 6} ${c[0]} ${c[1]}`;
  }
  return d + "Z";
}

const blobs: { points: Point[]; anchor: Point }[] = [
  {
    points: [[614, 371], [597, 374], [582, 382], [572, 393], [568, 407], [570, 423], [585, 438], [610, 441], [630, 439], [645, 440], [658, 433], [663, 417], [660, 400], [647, 382], [632, 374]],
    anchor: [645, 440],
  },
  {
    points: [[624, 449], [598, 458], [586, 472], [583, 490], [592, 510], [614, 519], [622, 517], [647, 507], [658, 503], [672, 496], [675, 485], [663, 467], [648, 455]],
    anchor: [614, 519],
  },
  {
    points: [[722, 362], [697, 373], [680, 398], [676, 425], [685, 449], [694, 468], [696, 492], [701, 504], [713, 508], [735, 498], [757, 478], [770, 448], [775, 418], [771, 393], [760, 373], [743, 364]],
    anchor: [714, 508],
  },
  {
    points: [[783, 456], [770, 462], [765, 476], [755, 493], [757, 501], [783, 498], [797, 492], [802, 477], [795, 460]],
    anchor: [783, 498],
  },
  {
    points: [[830, 347], [803, 354], [787, 373], [785, 393], [795, 416], [805, 431], [808, 448], [807, 469], [813, 481], [827, 485], [847, 477], [877, 450], [893, 418], [895, 390], [889, 372], [870, 355], [850, 348]],
    anchor: [827, 485],
  },
  {
    points: [[897, 331], [886, 337], [887, 347], [900, 358], [915, 364], [926, 357], [927, 346], [913, 334]],
    anchor: [915, 363],
  },
  {
    points: [[903, 440], [889, 446], [881, 458], [880, 470], [885, 479], [908, 478], [922, 471], [926, 457], [917, 443]],
    anchor: [908, 479],
  },
];

const ovalFront: Point[] = [[489, 430], [493, 415], [505, 402], [527, 395], [547, 400], [559, 414], [568, 440], [576, 468], [577, 487], [563, 517], [543, 532], [523, 535], [504, 526], [497, 508], [493, 480], [490, 453]];

function ModelView() {
  return (
    <svg
      viewBox="85 185 1028 458"
      preserveAspectRatio="xMidYMid slice"
      className="absolute inset-0 size-full"
      fill="none"
      role="img"
      aria-label="3D model"
    >
      <defs>
        <pattern id="brickBack" width="21.500" height="18.400" patternUnits="userSpaceOnUse" patternTransform="matrix(1 -0.140 0 1 0 2)">
          <path d="M0 .5h21.500M0 9.700h21.500M5 .5v9.200M15.700 9.700v9.200" stroke="#a09a94" />
        </pattern>
        <pattern id="brickFront" width="20.600" height="17.200" patternUnits="userSpaceOnUse" patternTransform="matrix(1 -0.140 0 1 0 2)">
          <path d="M0 .5h20.600M0 9.100h20.600M5 .5v8.600M15.300 9.100v8.600" stroke="#9c9690" />
        </pattern>
        <pattern id="brickDark" width="13" height="17.200" patternUnits="userSpaceOnUse" patternTransform="matrix(1 0.580 0 1 0 0)">
          <path d="M0 .5h13M0 9.100h13M4 .5v8.600M10 9.100v8.600" stroke="#716d68" strokeWidth="0.800" />
        </pattern>
        <linearGradient id="tube" x1="0" y1="0" x2="0.200" y2="1">
          <stop offset="0.120" stopColor="#fff" />
          <stop offset="0.400" stopColor="#e8e1e1" />
          <stop offset="1" stopColor="#e0d9d8" />
        </linearGradient>
        <radialGradient id="click">
          <stop offset="0.900" stopColor="#559bf8" stopOpacity="0.880" />
          <stop offset="1" stopColor="#559bf8" stopOpacity="0" />
        </radialGradient>
      </defs>

      <path d="M85 185h1028v458H85z" fill="#d5d5d9" />

      <g stroke="#77746f" strokeWidth="0.900">
        <path d="M89 443L340 592 1108 486 903 364 700 340 322 411z" fill="#fff" />
        <path d="M89 443v8l251 149v-8z" fill="#dbd9d7" />
        <path d="M340 592v8l768-108v-6z" fill="#fff" />
      </g>

      <g stroke="#333" strokeWidth="0.900">
        <path d="M356 287L326 269C315 262 300 262 288 271 274 283 270 300 271 315L283 394C284 400 289 402 293 404L322 420 330 400z" fill="url(#tube)" />
        <path d="M288 271l34 20M272 302l50 28M272 321l50 29M274 341l48 27M278 365l44 26M281 385l41 25" strokeWidth="0.800" />
      </g>

      <path d="M322 292L772 229 902 306 453 369z" fill="#e0dcd5" stroke="#55524e" strokeWidth="0.900" />
      <path d="M338 293L767 234v88L458 364z" fill="#c6c1bb" />
      <path d="M338 293L767 234v88L458 364z" fill="url(#brickBack)" stroke="#55524e" strokeWidth="0.900" />
      <path d="M767 234l121 70-121 18z" fill="#88837e" />
      <path d="M767 234l121 70-121 18z" fill="url(#brickDark)" stroke="#55524e" strokeWidth="0.900" />
      <path d="M364 308Q376 301 388 308L480 361 458 364z" fill="#fff" />
      <path d="M364 308Q376 301 388 308L480 361" stroke="#55524e" strokeWidth="0.700" />
      <path d="M322 292L453 369V533L322 455z" fill="#7b7873" />
      <path d="M322 292L453 369V533L322 455z" fill="url(#brickDark)" stroke="#3a3835" strokeWidth="0.900" />
      <path d="M453 369L902 306V470L453 533z" fill="#bfbab4" />
      <path d="M453 369L902 306V470L453 533z" fill="url(#brickFront)" stroke="#3a3835" strokeWidth="0.900" />

      <path d="M478 385C488 376 507 376 519 383L540 396 560 420 510 530 479 516C466 500 469 470 464 440 461 415 463 398 478 385z" fill="url(#tube)" />
      <path d="M478 385C488 376 507 376 519 383L540 397M478 385l27 17M463 416l26 15M462 435l28 16M465 455l26 15M467 479l27 16M469 499l28 16M479 515l25 13" stroke="#333" strokeWidth="0.800" />
      <path d={smooth(ovalFront)} fill="#fff" stroke="#333" strokeWidth="0.900" />

      {blobs.map(({ points, anchor }) => (
        <g key={anchor.join()}>
          <path d={smooth(points)} fill="#e3ffe3" stroke="#3fae44" strokeWidth="1.600" />
          <path d={smooth(points)} stroke="#1f7a25" strokeWidth="0.800" />
          {points.map(([x, y]) => (
            <rect key={`${x},${y}`} x={x - 1.5} y={y - 1.5} width="3" height="3" fill="#2ca834" />
          ))}
          <circle cx={anchor[0]} cy={anchor[1]} r="3.500" fill="#22a52b" />
          <circle cx={anchor[0]} cy={anchor[1]} r="2.300" fill="#0b4210" />
        </g>
      ))}

      <circle cx="744" cy="417" r="46" fill="url(#click)" />
      <path d="M743.500 414v13l3-3.500 6-.5z" fill="#111" stroke="#ddd" strokeWidth="0.500" />
      <path d="M751.500 427.500c-1 6 7 6 10 1 1-3 0-5-2-6" stroke="#222" strokeWidth="4.600" />
      <path d="M751.500 427.500c-1 6 7 6 10 1 1-3 0-5-2-6" stroke="#fff" strokeWidth="2.800" />
      <path d="M751 428l5-5" stroke="#222" strokeWidth="1.200" />

      <g stroke="#e6a87c" strokeWidth="1.200" strokeDasharray="5 2">
        <path d="M586 194h26M586 635h26" />
        <path d="M94.500 401v26M1103 401v26" />
      </g>
      <path d="M275 624v19" stroke="#111" strokeWidth="1.600" />
      <text x="274" y="618" fontSize="9" fill="#222" fontWeight="600">
        z
      </text>
    </svg>
  );
}

const viewOptions = [
  { icon: "fitZoom", text: "Current Zoom", muted: true },
  { icon: "rotate", text: "0,00°", muted: true },
  { icon: "scale", text: "1:48" },
  { icon: "layerStack", text: "Floor Plan" },
  { icon: "model", text: "Entire Model" },
  { icon: "pen", text: "US ArchiCAD..." },
  { icon: "doubleRect", text: "Construction..." },
  { icon: "override", text: "No Overrides" },
];

function ViewOptionsBar() {
  return (
    <div className="flex h-[19px] shrink-0 items-center overflow-hidden border-b border-[#c5c5c5] bg-[#f0f0f1] pr-[11px] text-[10px]">
      <div className="flex w-[67px] shrink-0 border-r border-[#888]">
        <Icon name="zoomOut" className="-my-0.5 scale-90 text-[#aaa]" />
        <Icon name="zoomBack" className="-mx-0.5 -my-0.5 scale-90 text-[#aaa]" />
        <Icon name="zoomIn" className="-my-0.5" />
      </div>
      <div className="flex w-12 shrink-0 justify-center border-r border-[#888]">
        <Icon name="orbit" className="-my-0.5" />
        <Icon name="walk" className="-my-0.5 text-[#aaa]" />
      </div>
      {viewOptions.map(({ icon, text, muted }) => (
        <button
          key={text}
          type="button"
          className={`flex min-w-0 flex-1 items-center border-r border-[#999] pr-1 whitespace-nowrap last:border-r-0 ${muted ? "text-[#8a8a8a]" : ""}`}
        >
          <Icon name={icon} className={`-my-0.5 ${icon === "fitZoom" ? "text-black" : ""}`} />
          <span className="flex-1 pl-0.5">{text}</span>
          <Caret />
        </button>
      ))}
    </div>
  );
}

type TreeItem = { text: string; icon: string; depth: 0 | 1; open?: boolean; current?: boolean };

const tree: TreeItem[] = [
  { text: "Stories", icon: "story", depth: 0, open: true },
  { text: "2. ROOF", icon: "story", depth: 1 },
  { text: "1. 1st FLOOR", icon: "story", depth: 1 },
  { text: "Sections", icon: "house", depth: 0 },
  { text: "Elevations", icon: "pentagon", depth: 0, open: true },
  { text: "EAST ELEVATION (Auto-rebuild Model)", icon: "pentagon", depth: 1 },
  { text: "NORTH ELEVATION (Auto-rebuild Model)", icon: "pentagon", depth: 1 },
  { text: "SOUTH ELEVATION (Auto-rebuild Model)", icon: "pentagon", depth: 1 },
  { text: "WEST ELEVATION (Auto-rebuild Model)", icon: "pentagon", depth: 1 },
  { text: "Interior Elevations", icon: "interiorBox", depth: 0 },
  { text: "Worksheets", icon: "sheetPen", depth: 0 },
  { text: "Details", icon: "detail", depth: 0 },
  { text: "3D Documents", icon: "docCube", depth: 0 },
  { text: "3D", icon: "persp", depth: 0, open: true },
  { text: "Generic Perspective", icon: "persp", depth: 1 },
  { text: "Generic Axonometry", icon: "axo", depth: 1, current: true },
];

function Navigator() {
  return (
    <aside className="flex w-[167px] shrink-0 flex-col overflow-hidden bg-[#f0f0f1] text-[10px]">
      <div className="flex h-[7px] items-center justify-center">
        <span className="h-px w-16 bg-[#777]" />
      </div>
      <div className="flex h-[34px] shrink-0 items-center">
        <button type="button" aria-label="Project chooser" className={`${box} mr-[15px] ml-px h-[27px] w-10 shrink-0 justify-between px-0.5`}>
          <Icon name="treeHouse" />
          <Caret />
        </button>
        <Tool name="houseBlue" width="w-7" className={active} />
        <Tool name="story" width="w-7" />
        <Tool name="viewMap" width="w-7" />
        <Tool name="books" width="w-8" />
      </div>
      <div className="flex h-[331px] shrink-0">
        <ul className="flex min-w-0 flex-1 flex-col overflow-hidden bg-white">
          {tree.map(({ text, icon, depth, open, current }) => (
            <li
              key={text}
              className={`flex flex-1 items-center whitespace-nowrap ${depth ? "pl-[35px]" : "pl-[18px]"} ${current ? "border-y border-[#ddd] bg-[#f7f7f7] font-bold" : ""}`}
            >
              {depth === 0 && <span className="w-2">{open && <Caret dir="open" className="scale-75" />}</span>}
              <Icon name={icon} className="-my-1 scale-90" />
              <span className="pl-px">{text}</span>
            </li>
          ))}
        </ul>
        <div className="flex w-[13px] flex-col items-center justify-between bg-[#f0f0f1]">
          <svg viewBox="0 0 12 24" className="h-6 w-3" fill="none" stroke="#444" strokeWidth="1.500">
            <path d="M3 9l3-3 3 3 3-3" />
          </svg>
          <div className="h-[138px] w-full bg-[#cdcdcd]" />
          <div className="flex-1" />
          <svg viewBox="0 0 12 12" className="size-3" fill="none" stroke="#444" strokeWidth="1.500">
            <path d="M3 5l3 3 3-3 3 3" />
          </svg>
        </div>
      </div>
      <div className="flex h-5 shrink-0 items-center gap-[5px] pl-1">
        <svg viewBox="0 0 8 10" className="h-2.5 w-[7px]" fill="none" stroke="#333" strokeWidth="1.600">
          <path d="M6 1L2 5l4 4" />
        </svg>
        <div className="h-3.5 w-[65px] bg-[#cdcdcd]" />
        <div className="flex-1" />
        <svg viewBox="0 0 8 10" className="mr-[18px] h-2.5 w-[7px]" fill="none" stroke="#333" strokeWidth="1.600">
          <path d="M2 1l4 4-4 4" />
        </svg>
      </div>
      <div className="flex h-[37px] shrink-0 items-center justify-end gap-1 pb-1 pl-[86px]">
        <Icon name="newView" />
        <Icon name="addFolder" className="text-[#8f8fc4]" />
        <Icon name="cross" className="text-[#e3937d]" />
      </div>
      <PaletteHeader className="h-[17px] shrink-0 text-black">Properties</PaletteHeader>
      <div className="flex h-6 shrink-0 items-center pr-3">
        <Icon name="axo" className="-ml-1 scale-75" />
        <span className="flex-1 text-right">Generic Axonometry</span>
      </div>
      <button type="button" className="ml-0.5 h-[19px] shrink-0 border border-r-0 border-[#b0b0b0] bg-[#ebebeb] leading-4">
        Settings...
      </button>
    </aside>
  );
}

function Taskbar() {
  const app = "flex h-full w-[54px] items-center justify-center border border-[#c39bab] bg-[#b48ba0]";
  return (
    <footer className="flex h-[37px] shrink-0 items-center bg-[linear-gradient(90deg,#a07a90_0%,#a48096_78%,#a97c8f_85%,#a75c72_88%,#b47f96_90%,#a9718c_98%,#a08a6c_100%)]">
      <button type="button" aria-label="Start" className="ml-[7px] flex w-[49px] items-center">
        <svg viewBox="0 0 36 36" className="size-9">
          <circle cx="18" cy="18" r="17" fill="#1c5468" stroke="#8ba5ae" />
          <circle cx="18" cy="13" r="11" fill="#3f8b96" opacity="0.600" />
          <path d="M12 27c-7-4-8-11-4-14 2-4 5-4 7-2 1-3 5-3 6 0 3-2 6-1 7 2 4 4 3 10-4 14z" fill="none" stroke="#c9c47e" strokeWidth="1.300" />
          <path d="M13 26l-3-9M16 26l-1-13M20 26l1-13M23 26l3-9" fill="none" stroke="#6f9f87" />
        </svg>
      </button>
      <div className="flex h-full gap-1">
        <button type="button" aria-label="File Explorer" className={app}>
          <svg viewBox="0 0 32 30" className="h-[30px] w-8">
            <path d="M2 3h13l2 3h13v20H2z" fill="#e6c65f" />
            <path d="M3 8h27v17H3z" fill="#f7e39a" />
            <path d="M8 3h5v3H8zM19 4h5v3h-5z" fill="#a7633c" />
            <path d="M6 28V18h20v10h-5v-5H11v5z" fill="#86c9e8" stroke="#4f98bd" />
          </svg>
        </button>
        <button type="button" aria-label="Chrome" className={app}>
          <svg viewBox="-15 -15 30 30" className="size-[29px]">
            <path d="M0 0L-12-7A14 14 0 0 1 12-7z" fill="#dd4b3e" />
            <path d="M0 0L12-7A14 14 0 0 1 0 14z" fill="#fbcf3b" />
            <path d="M0 0v14A14 14 0 0 1-12-7z" fill="#1f9d58" />
            <circle r="6.500" fill="#fff" />
            <circle r="5" fill="#4285f0" />
          </svg>
        </button>
        <button type="button" aria-label="ArchiCAD" className="flex h-full w-[54px] items-center justify-center border border-[#efe4ea] bg-[#cdb5c4]">
          <svg viewBox="0 0 26 26" className="size-[26px]">
            <path d="M0 0h26v26H0z" fill="#f3f7fd" />
            <path d="M0 0h11C6 3 3 9 0 18z" fill="#2f71dd" />
            <path d="M2 26C4 12 8 3 12 1c3 6 3 15 2 25z" fill="#a7c7f5" />
            <path d="M10 4c3-4 7-2 9 3 3 6 4 13 5 19H14C14 17 13 9 10 4z" fill="#2f71dd" />
          </svg>
        </button>
        <button type="button" aria-label="Camtasia" className={app}>
          <svg viewBox="0 0 30 30" className="size-[30px]">
            <rect width="30" height="30" rx="3" fill="#3d9a17" />
            <path d="M24 8V4H12L7 9v12l5 5h12v-5H14l-2-2v-9l2-2z" fill="#f3f7ee" />
          </svg>
        </button>
        <button type="button" aria-label="Camtasia Recorder" className={app}>
          <svg viewBox="0 0 30 30" className="size-[30px]">
            <rect width="30" height="30" rx="3" fill="#f2554a" />
            <path d="M24 8V4H12L7 9v12l5 5h12v-5H14l-2-2v-9l2-2z" fill="#fdf1ee" />
          </svg>
        </button>
      </div>
      <div className="ml-auto flex items-center gap-2 pr-4 text-white">
        <svg viewBox="0 0 8 6" className="mr-1 h-1.5 w-2 fill-white">
          <path d="M4 1l4 4H0z" />
        </svg>
        <svg viewBox="0 0 15 16" className="h-4 w-[15px]" fill="none" stroke="#fff" strokeWidth="1.400">
          <path d="M2 1v4M5 1v4M1 5h5v4H1zM3.500 9v6M9 3h5v12H9zM10 1.500h3" />
        </svg>
        <svg viewBox="0 0 15 14" className="h-3.5 w-[15px]" fill="none" stroke="#fff" strokeWidth="1.300">
          <path d="M1 5h3l4-4v12L4 9H1z" fill="#fff" />
          <path d="M10 4c2 2 2 4 0 6M12 2c3 3 3 7 0 10" />
        </svg>
        <svg viewBox="0 0 15 12" className="h-3 w-[15px] fill-white">
          <path d="M0 9h2v3H0zM3 7h2v5H3zM6 5h2v7H6zM9 2h2v10H9zM12 0h2v12h-2z" />
        </svg>
        <svg viewBox="0 0 14 14" className="h-3.5 w-3.5 fill-white">
          <path d="M1 1h1v13H1zM3 1h5v2h6l-2 3 1 2H8V7H3z" />
        </svg>
        <span className="ml-1.5 text-[11px]">FRA</span>
        <time className="ml-2 text-center text-[10px] leading-4">
          19:18
          <br />
          06/11/2019
        </time>
      </div>
    </footer>
  );
}

export default function App() {
  return (
    <div className="relative flex min-h-screen flex-col overflow-hidden bg-[#f0f0f1] font-['Open_Sans','Noto_Sans',sans-serif] text-[#111]">
      <TitleBar />
      <MenuBar />
      <MainToolbar />
      <LayerToolbar />
      <InfoBox />
      <main className="flex flex-1 overflow-hidden">
        <Toolbox />
        <div className="flex min-w-0 flex-1 flex-col">
          <TabBar />
          <div className="relative flex-1">
            <ModelView />
          </div>
          <ViewOptionsBar />
        </div>
        <Navigator />
      </main>
      <div className="flex h-5 shrink-0 items-center justify-end border-t border-[#d5d5d5] pr-[88px]">
        <Icon name="windows" className="scale-90" />
      </div>
      <Taskbar />
      <div className="pointer-events-none absolute right-[57px] bottom-[66px] w-[275px] text-[13px] leading-[19px] whitespace-nowrap text-black/20">
        <p className="text-[18px] leading-6">Activer Windows</p>
        <p>Accédez aux paramètres de l'ordinateur pour</p>
        <p>activer Windows.</p>
      </div>
    </div>
  );
}
